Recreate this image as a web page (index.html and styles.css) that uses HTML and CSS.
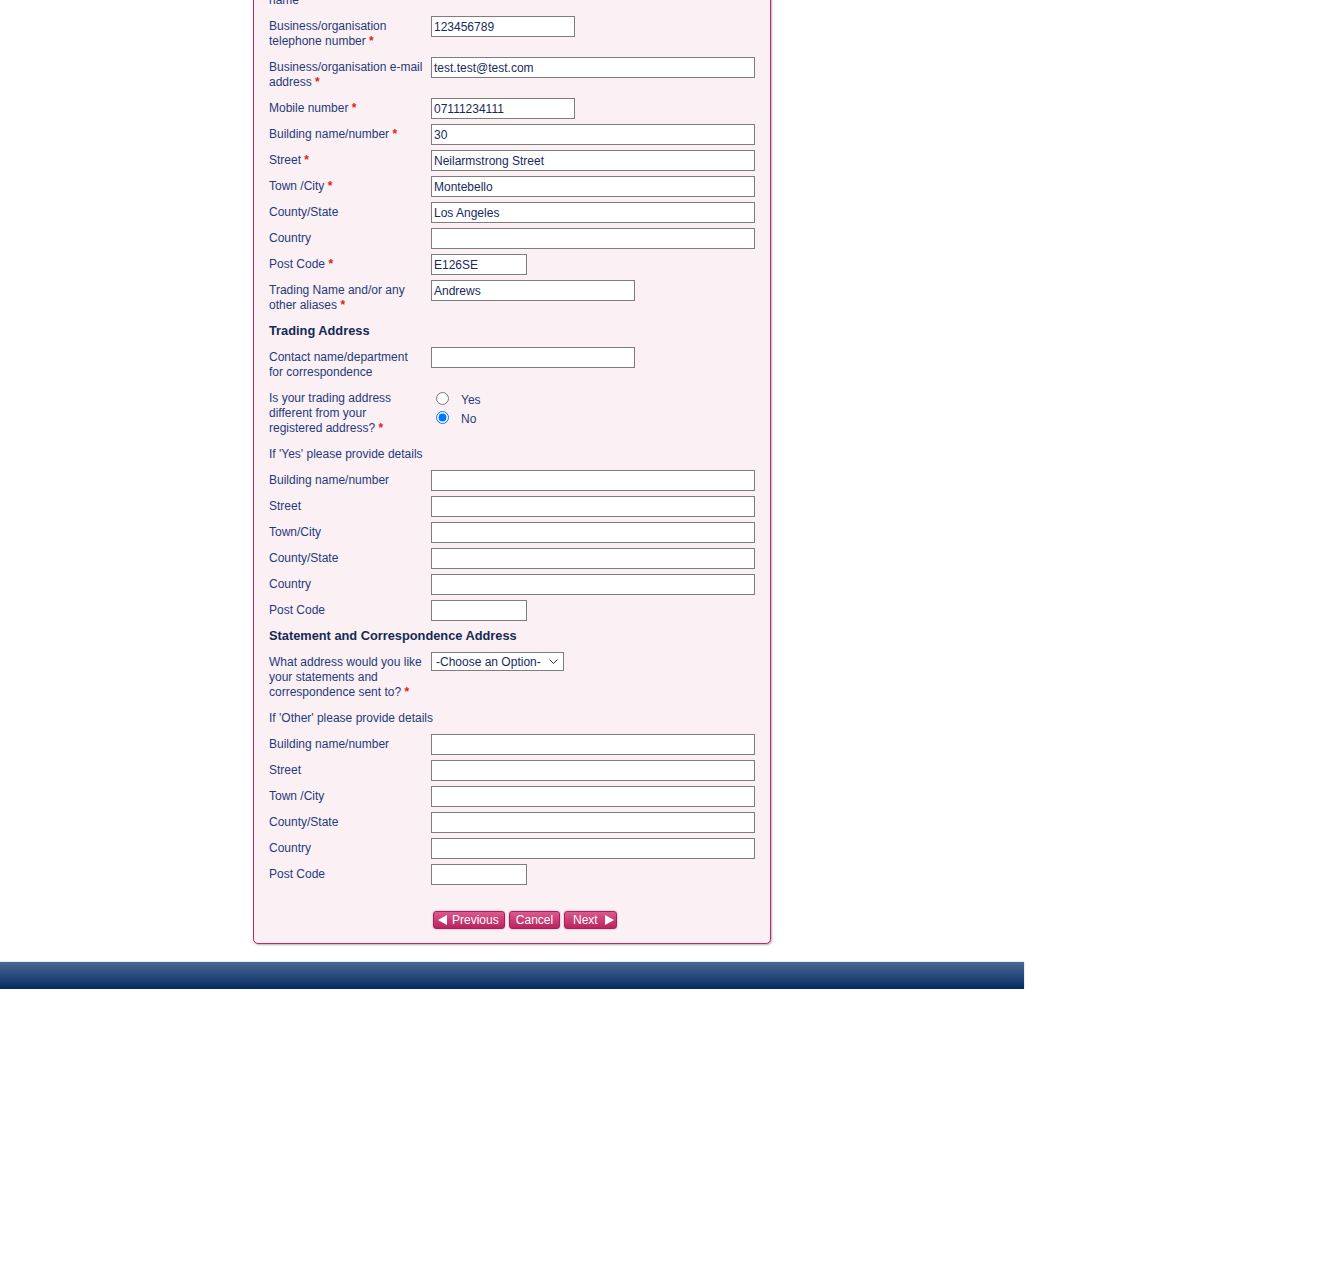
FILE: index.html
```html
<!DOCTYPE html>
<html lang="en">

<head>
    <meta charset="UTF-8">
    <meta name="viewport" content="width=device-width, initial-scale=1.0">
    <title>Business Details</title>
    <link rel="stylesheet" href="styles.css">
</head>

<body>
    <div class="page">
        <form class="panel">
            <div class="row">
                <label class="lbl">Business/organisation<br>name</label>
                <div class="field"><input type="text" class="wide"></div>
            </div>
            <div class="row">
                <label class="lbl">Business/organisation<br>telephone number <span class="req">*</span></label>
                <div class="field"><input type="text" class="short" value="123456789"></div>
            </div>
            <div class="row">
                <label class="lbl">Business/organisation e-mail<br>address <span class="req">*</span></label>
                <div class="field"><input type="text" class="wide" value="test.test@test.com"></div>
            </div>
            <div class="row">
                <label class="lbl">Mobile number <span class="req">*</span></label>
                <div class="field"><input type="text" class="short" value="07111234111"></div>
            </div>
            <div class="row">
                <label class="lbl">Building name/number <span class="req">*</span></label>
                <div class="field"><input type="text" class="wide" value="30"></div>
            </div>
            <div class="row">
                <label class="lbl">Street <span class="req">*</span></label>
                <div class="field"><input type="text" class="wide" value="Neilarmstrong Street"></div>
            </div>
            <div class="row">
                <label class="lbl">Town /City <span class="req">*</span></label>
                <div class="field"><input type="text" class="wide" value="Montebello"></div>
            </div>
            <div class="row">
                <label class="lbl">County/State</label>
                <div class="field"><input type="text" class="wide" value="Los Angeles"></div>
            </div>
            <div class="row">
                <label class="lbl">Country</label>
                <div class="field"><input type="text" class="wide"></div>
            </div>
            <div class="row">
                <label class="lbl">Post Code <span class="req">*</span></label>
                <div class="field"><input type="text" class="post" value="E126SE"></div>
            </div>
            <div class="row">
                <label class="lbl">Trading Name and/or any<br>other aliases <span class="req">*</span></label>
                <div class="field"><input type="text" class="medium" value="Andrews"></div>
            </div>

            <h3 class="section">Trading Address</h3>

            <div class="row">
                <label class="lbl">Contact name/department<br>for correspondence</label>
                <div class="field"><input type="text" class="medium"></div>
            </div>
            <div class="row">
                <label class="lbl">Is your trading address<br>different from your<br>registered address? <span class="req">*</span></label>
                <div class="field radios">
                    <label class="opt"><input type="radio" name="diff"><span>Yes</span></label>
                    <label class="opt"><input type="radio" name="diff" checked><span>No</span></label>
                </div>
            </div>

            <p class="note">If 'Yes' please provide details</p>

            <div class="row">
                <label class="lbl">Building name/number</label>
                <div class="field"><input type="text" class="wide"></div>
            </div>
            <div class="row">
                <label class="lbl">Street</label>
                <div class="field"><input type="text" class="wide"></div>
            </div>
            <div class="row">
                <label class="lbl">Town/City</label>
                <div class="field"><input type="text" class="wide"></div>
            </div>
            <div class="row">
                <label class="lbl">County/State</label>
                <div class="field"><input type="text" class="wide"></div>
            </div>
            <div class="row">
                <label class="lbl">Country</label>
                <div class="field"><input type="text" class="wide"></div>
            </div>
            <div class="row">
                <label class="lbl">Post Code</label>
                <div class="field"><input type="text" class="post"></div>
            </div>

            <h3 class="section">Statement and Correspondence Address</h3>

            <div class="row">
                <label class="lbl">What address would you like<br>your statements and<br>correspondence sent to? <span class="req">*</span></label>
                <div class="field">
                    <span class="select-wrap">
                        <select class="choose">
                            <option>-Choose an Option-</option>
                            <option>Registered address</option>
                            <option>Trading address</option>
                            <option>Other</option>
                        </select>
                        <svg class="chevron" width="9" height="6" viewBox="0 0 9 6"><path d="M0.5 0.5 L4.5 4.5 L8.5 0.5" fill="none" stroke="#333" stroke-width="1"/></svg>
                    </span>
                </div>
            </div>

            <p class="note">If 'Other' please provide details</p>

            <div class="row">
                <label class="lbl">Building name/number</label>
                <div class="field"><input type="text" class="wide"></div>
            </div>
            <div class="row">
                <label class="lbl">Street</label>
                <div class="field"><input type="text" class="wide"></div>
            </div>
            <div class="row">
                <label class="lbl">Town /City</label>
                <div class="field"><input type="text" class="wide"></div>
            </div>
            <div class="row">
                <label class="lbl">County/State</label>
                <div class="field"><input type="text" class="wide"></div>
            </div>
            <div class="row">
                <label class="lbl">Country</label>
                <div class="field"><input type="text" class="wide"></div>
            </div>
            <div class="row">
                <label class="lbl">Post Code</label>
                <div class="field"><input type="text" class="post"></div>
            </div>

            <div class="actions">
                <button type="button" class="btn btn-prev">
                    <svg width="9" height="10" viewBox="0 0 9 10"><path d="M0 5 L9 0 L9 10 Z" fill="#fff"/></svg>
                    Previous
                </button>
                <button type="button" class="btn btn-cancel">Cancel</button>
                <button type="button" class="btn btn-next">
                    Next
                    <svg width="9" height="10" viewBox="0 0 9 10"><path d="M0 0 L9 5 L0 10 Z" fill="#fff"/></svg>
                </button>
            </div>
        </form>

        <div class="footer-bar"></div>
    </div>
</body>

</html>
```

FILE: styles.css
```css
* {
    margin: 0;
    padding: 0;
    box-sizing: border-box;
}

body {
    font-family: "Liberation Sans", Arial, sans-serif;
    font-size: 12px;
    color: #1f3b7a;
    background: #fff;
}

.page {
    width: 1024px;
}

.panel {
    display: block;
    width: 518px;
    margin: -37px 0 0 253px;
    padding: 10px 15px 14px 15px;
    background-color: #fbf0f4;
    border: 1px solid #c8246a;
    border-radius: 0 0 5px 5px;
    box-shadow: 1px 1px 2px rgba(0, 0, 0, 0.3);
}

.row {
    display: flex;
    align-items: flex-start;
}

.lbl {
    width: 162px;
    flex-shrink: 0;
    padding: 4px 0 7px 0;
    line-height: 15px;
    white-space: nowrap;
}

.req {
    color: #e41b1b;
    font-weight: bold;
}

.field {
    padding-top: 1px;
}

input[type="text"] {
    display: block;
    height: 21px;
    padding: 0 2px;
    border: 1px solid #7d7d7d;
    border-radius: 0;
    background: #fff;
    font-family: "Liberation Sans", Arial, sans-serif;
    font-size: 12px;
    color: #182a5c;
    outline: none;
}

.wide {
    width: 324px;
}

.short {
    width: 144px;
}

.medium {
    width: 204px;
}

.post {
    width: 96px;
}

.radios {
    padding-top: 3px;
}

.opt {
    display: flex;
    align-items: center;
    height: 19px;
}

.opt input {
    width: 13px;
    height: 13px;
    margin: -3px 0 0 5px;
}

.opt span {
    margin-left: 12px;
}

.select-wrap {
    position: relative;
    display: block;
    width: 133px;
}

.choose {
    display: block;
    width: 133px;
    height: 19px;
    padding-left: 4px;
    border: 1px solid #7d7d7d;
    border-radius: 0;
    background: #fff;
    font-family: "Liberation Sans", Arial, sans-serif;
    font-size: 12px;
    color: #182a5c;
    appearance: none;
    -webkit-appearance: none;
}

.chevron {
    position: absolute;
    right: 6px;
    top: 7px;
    pointer-events: none;
}

.section {
    font-size: 12.8px;
    font-weight: bold;
    color: #142a55;
    line-height: 15px;
    padding: 3px 0 8px 0;
}

.note {
    line-height: 15px;
    padding: 4px 0 7px 0;
}

.actions {
    display: flex;
    gap: 4px;
    margin: 22px 0 0 164px;
}

.btn {
    display: flex;
    align-items: center;
    gap: 5px;
    height: 18px;
    padding: 0 7px;
    border: 1px solid #b01c5a;
    border-radius: 3px;
    background: linear-gradient(#da5a8e, #b8235f);
    box-shadow: 0 0 2px rgba(60, 60, 90, 0.45);
    color: #fff;
    font-family: "Liberation Sans", Arial, sans-serif;
    font-size: 12px;
}

.btn-prev {
    width: 72px;
    padding: 0 0 0 4px;
}

.btn-cancel {
    width: 51px;
    justify-content: center;
}

.btn-next {
    width: 53px;
    padding: 0 0 0 8px;
    gap: 7px;
}

.footer-bar {
    width: 1024px;
    height: 27px;
    margin-top: 18px;
    background: linear-gradient(#4a6894, #062a63);
    box-shadow: 0 0 2px rgba(120, 140, 170, 0.5);
}
```
